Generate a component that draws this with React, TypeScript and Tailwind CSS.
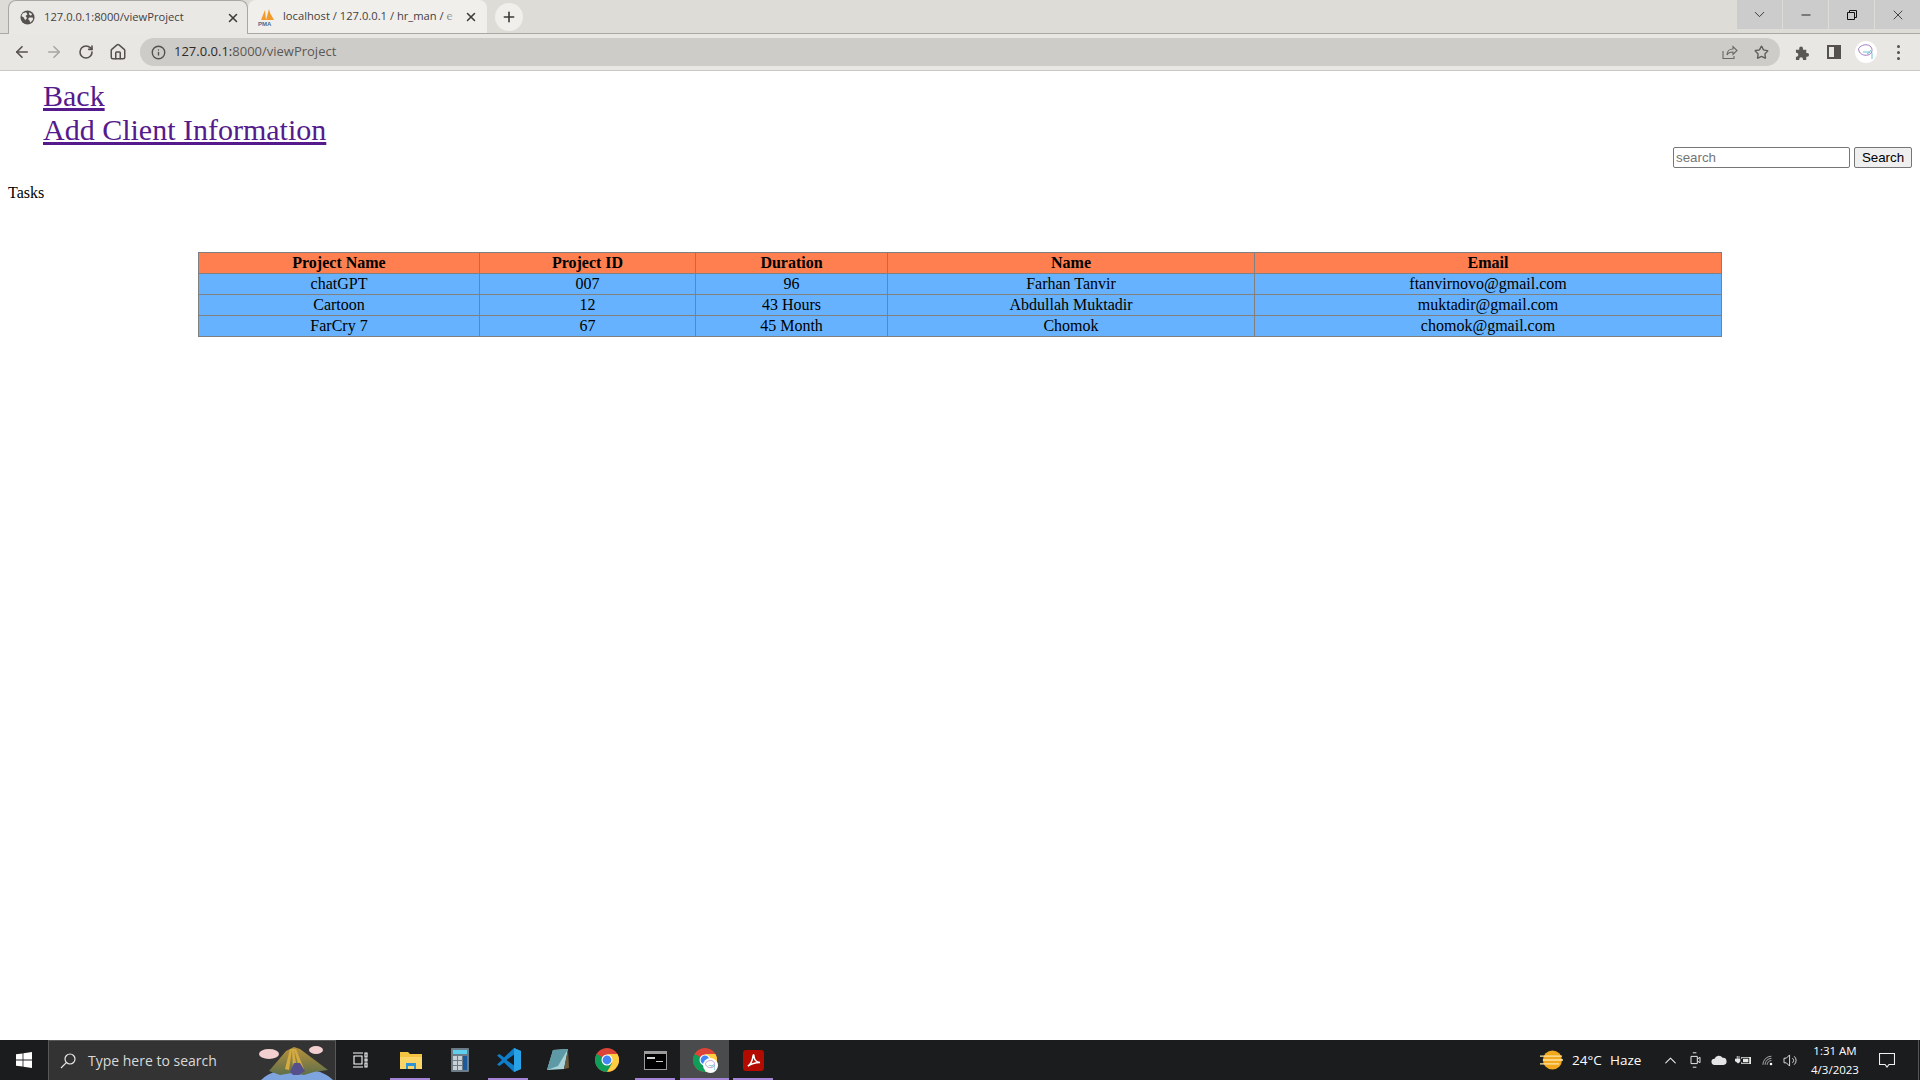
import { ArrowLeft, ArrowRight, ChevronDown, ChevronUp, Home, Info, Minus, Plus, RotateCw, Star, X } from "lucide-react"

const rows = [
  ["chatGPT", "007", "96", "Farhan Tanvir", "ftanvirnovo@gmail.com"],
  ["Cartoon", "12", "43 Hours", "Abdullah Muktadir", "muktadir@gmail.com"],
  ["FarCry 7", "67", "45 Month", "Chomok", "chomok@gmail.com"],
]

function Globe() {
  return (
    <svg viewBox="0 0 16 16" className="h-[15px] w-[15px] shrink-0">
      <circle cx="8" cy="8" r="7.5" fill="#55514f" />
      <path d="M3 3.5 6.5 2.5 8 4.5 6 6.5 7.5 8.5 5.5 11 4 8 1.5 6.5ZM10 8h3.5l.5 2-3 3.5-1-2.5-1.500-1.500ZM10 2.500l3 2-1.500 1.500-2-1.500Z" fill="#e9e8e5" />
    </svg>
  )
}

function PmaLogo() {
  return (
    <svg viewBox="0 0 18 18" className="h-[18px] w-[18px] shrink-0">
      <path d="M3 12 7 2l1 10ZM8 12 11 1l3 11ZM12 5l4 7h-2Z" fill="#f29b2b" />
      <text x="0" y="18" fontSize="6" fontWeight="700" fontFamily="'Liberation Sans', sans-serif" fill="#4b6a94">PMA</text>
    </svg>
  )
}

function ChromeIcon({ className }: { className?: string }) {
  return (
    <svg viewBox="0 0 24 24" className={className}>
      <circle cx="12" cy="12" r="12" fill="#db4437" />
      <path d="M12 12 1.600 6A12 12 0 0 0 12 24l6-10.400Z" fill="#0f9d58" />
      <path d="M12 6h10.400A12 12 0 0 1 12 24l5.200-9Z" fill="#ffcd40" />
      <circle cx="12" cy="12" r="5.500" fill="#fff" />
      <circle cx="12" cy="12" r="4.400" fill="#4285f4" />
    </svg>
  )
}

function Avatar({ className }: { className?: string }) {
  return (
    <svg viewBox="0 0 22 22" className={className}>
      <circle cx="11" cy="11" r="11" fill="#fff" />
      <path d="M5 6c3-3 9-3 11 0s1 7-3 8-8-1-9-4 0-3 1-4Z" fill="none" stroke="#8b5bb5" strokeWidth="0.8" />
      <path d="M8 11h7l-3 2M15 9l2 3v6" fill="none" stroke="#46b4c4" strokeWidth="0.8" />
    </svg>
  )
}

function TabClose() {
  return <X className="h-[14px] w-[14px] shrink-0 text-[#3f3b39]" strokeWidth={2.6} />
}

function BrowserChrome() {
  return (
    <div className="shrink-0 bg-[#e8e7e3] font-['Open_Sans',sans-serif]">
      <div className="flex h-[34px] border-b border-[#a9a8a3] bg-[#dedcd6]">
        <div className="ml-2 flex h-[34px] w-[240px] items-center gap-[9px] rounded-t-lg border border-b-0 border-[#a9a8a3] bg-[#e9e8e5] pl-[11px] pr-[7px] text-[11.2px] text-[#45413f]">
          <Globe />
          <span className="flex-1 truncate">127.0.0.1:8000/viewProject</span>
          <TabClose />
        </div>
        <div className="flex h-[33px] w-[239px] items-center gap-[7px] rounded-t-lg bg-[#f0efeb] pl-[10px] pr-[9px] text-[11.2px] text-[#45413f]">
          <PmaLogo />
          <span className="relative flex-1 overflow-hidden whitespace-nowrap">
            localhost / 127.0.0.1 / hr_man / e
            <span className="absolute right-0 top-0 h-full w-[14px] bg-gradient-to-r from-transparent to-[#f0efeb]" />
          </span>
          <TabClose />
        </div>
        <div className="ml-[8px] mt-[3px] flex h-[28px] w-[28px] items-center justify-center rounded-full bg-[#f0efeb]">
          <Plus className="h-[16px] w-[16px] text-[#3c3836]" strokeWidth={2.4} />
        </div>
        <div className="ml-auto flex h-[29px] gap-px">
          <div className="flex w-[45px] items-center justify-center bg-[#cccccc]"><ChevronDown className="h-[17px] w-[17px] text-[#222]" strokeWidth={1.2} /></div>
          <div className="flex w-[45px] items-center justify-center bg-[#cccccc]"><Minus className="h-[14px] w-[14px] text-[#111]" strokeWidth={1.5} /></div>
          <div className="flex w-[45px] items-center justify-center bg-[#cccccc]">
            <svg viewBox="0 0 10 10" className="h-[10px] w-[10px]" fill="none" stroke="#111" strokeWidth="1"><path d="M.5 2.500h7v7h-7zM2.500 2.500v-2h7v7h-2" /></svg>
          </div>
          <div className="flex w-[45px] items-center justify-center bg-[#cccccc]"><X className="h-[16px] w-[16px] text-[#111]" strokeWidth={1.1} /></div>
        </div>
      </div>
      <div className="flex h-[37px] items-center border-b border-[#c9c8c4]">
        <div className="flex w-[140px] items-center pl-[13px] text-[#55514f]">
          <ArrowLeft className="h-[18px] w-[18px]" strokeWidth={2.2} />
          <ArrowRight className="ml-[14px] h-[18px] w-[18px] text-[#a8a7a3]" strokeWidth={2.2} />
          <RotateCw className="ml-[15px] h-[16px] w-[16px]" strokeWidth={2.4} />
          <Home className="ml-[15px] h-[18px] w-[18px]" strokeWidth={2} />
        </div>
        <div className="flex h-[28px] w-[1640px] shrink-0 items-center rounded-full bg-[#cdccc8] pl-[11px] pr-[11px] text-[13px]">
          <Info className="h-[15px] w-[15px] text-[#55514f]" strokeWidth={2.2} />
          <span className="ml-[8px] text-[#2e2a28]">127.0.0.1:<span className="text-[#5c5855]">8000/viewProject</span></span>
          <svg viewBox="0 0 16 16" className="ml-auto h-[16px] w-[16px]" fill="none" stroke="#6a6865" strokeWidth="1.1">
            <path d="M1 7v7.500h11V12M5 11c0-4 3-6 6-6V2.500l4 4-4 4V8C8 8 6 9 5 11Z" />
          </svg>
          <Star className="ml-[16px] h-[15px] w-[15px] text-[#5f5d5a]" strokeWidth={2.2} />
        </div>
        <svg viewBox="0 0 16 16" className="ml-[15px] h-[15px] w-[15px] shrink-0" fill="#5a5855">
          <path d="M1 5h3.500V3.500a2 2 0 0 1 4 0V5H12v3.500h1a2 2 0 0 1 0 4h-1V16H8.500v-1a2 2 0 0 0-4 0v1H1v-3.500h1a2.200 2.200 0 0 0 0-4.200H1Z" />
        </svg>
        <svg viewBox="0 0 14 14" className="ml-[17px] h-[14px] w-[14px] shrink-0" fill="#55514f">
          <path d="M0 0h14v14H0Zm2 2v10h5V2Z" fillRule="evenodd" />
        </svg>
        <Avatar className="ml-[14px] h-[22px] w-[22px] shrink-0" />
        <div className="ml-[20px] flex shrink-0 flex-col gap-[3px]">
          <span className="h-[3px] w-[3px] rounded-full bg-[#55514f]" />
          <span className="h-[3px] w-[3px] rounded-full bg-[#55514f]" />
          <span className="h-[3px] w-[3px] rounded-full bg-[#55514f]" />
        </div>
      </div>
    </div>
  )
}

function Mountain() {
  return (
    <svg viewBox="0 0 80 40" className="h-10 w-[80px] shrink-0">
      <defs>
        <linearGradient id="rock" x1="0" y1="0" x2="0" y2="1">
          <stop offset="0" stopColor="#b8913a" />
          <stop offset="1" stopColor="#5f6f4a" />
        </linearGradient>
      </defs>
      <ellipse cx="42" cy="50" rx="41" ry="23" fill="#7fa5e0" />
      <path d="M14 30 31 10l8-4 6 2 28 21-14 2-10 3-12-2-12 2Z" fill="url(#rock)" />
      <path d="M35 8l-5 20 4 1 3-21 1 22 4 0-3-22 6 22 4-2-8-20Z" fill="#d3ab42" />
      <path d="M35 31l4-9 6 0 5 8-6 4h-6Z" fill="#55508c" />
      <ellipse cx="14" cy="13" rx="10" ry="5" fill="#f4cfd0" />
      <ellipse cx="61" cy="9" rx="7" ry="4" fill="#f4cfd0" />
    </svg>
  )
}

function Dock({ on, active, children }: { on?: boolean; active?: boolean; children: React.ReactNode }) {
  return (
    <div className={active ? "relative flex h-10 w-[49px] items-center justify-center bg-[#4a4b4c]" : "relative flex h-10 w-[49px] items-center justify-center"}>
      {children}
      {on && <span className={active ? "absolute bottom-0 left-0 h-[2px] w-full bg-[#a583d6]" : "absolute bottom-0 left-[4px] h-[2px] w-[40px] bg-[#a583d6]"} />}
    </div>
  )
}

function Taskbar() {
  return (
    <div className="flex h-10 shrink-0 items-center bg-[#1a1c1e] font-['Open_Sans',sans-serif] text-white">
      <div className="flex h-10 w-[48px] items-center justify-center">
        <svg viewBox="0 0 16 16" className="h-4 w-4" fill="#fff">
          <path d="M0 2.300 6.600 1.400v6.200H0ZM7.400 1.300 16 0v7.600H7.400ZM0 8.400h6.600v6.200L0 13.700ZM7.400 8.400H16V16l-8.600-1.300Z" />
        </svg>
      </div>
      <div className="flex h-10 w-[288px] items-center overflow-hidden border border-b-0 border-[#585858] bg-[#333333] pl-[11px]">
        <svg viewBox="0 0 16 16" className="h-4 w-4 shrink-0" fill="none" stroke="#e8e8e8" strokeWidth="1.2">
          <circle cx="10" cy="6" r="5" />
          <path d="M6.300 9.700 1 15" />
        </svg>
        <span className="ml-[12px] flex-1 whitespace-nowrap text-[14px] text-[#d9d9d9]">Type here to search</span>
        <Mountain />
      </div>
      <div className="flex h-10 w-[48px] items-center justify-center">
        <svg viewBox="0 0 16 16" className="h-4 w-4" fill="none" stroke="#fff" strokeWidth="1.1">
          <path d="M1 1h10M1 15h10M2 4h8v8H2zM13 1h2v4h-2zM13 7h2v2h-2zM13 11h2v4h-2z" />
        </svg>
      </div>
      <div className="ml-[2px] flex">
        <Dock on>
          <svg viewBox="0 0 22 20" className="h-[20px] w-[22px]">
            <path d="M0 2h8l2 2h12v15H0Z" fill="#f5c342" />
            <path d="M0 7h22v12H0Z" fill="#fbd568" />
            <path d="M6 13h10v6h-2v-3H8v3H6Z" fill="#2e94d6" />
          </svg>
        </Dock>
        <Dock>
          <svg viewBox="0 0 18 24" className="h-6 w-[18px]">
            <rect width="18" height="24" rx="1" fill="#6b7b88" />
            <rect x="2" y="2" width="14" height="4" fill="#5ed0ee" />
            <path d="M2 8h4v4H2zM7 8h4v4H7zM2 13h4v4H2zM7 13h4v4H7zM2 18h4v4H2zM7 18h4v4H7z" fill="#c9d1d6" />
            <path d="M12 8h4v14h-4z" fill="#1c5a9c" />
          </svg>
        </Dock>
        <Dock on>
          <svg viewBox="0 0 24 24" className="h-6 w-6">
            <path d="M17 0 7 9.500 2.500 6 0 7.500 5 12 0 16.500 2.500 18 7 14.500 17 24l7-3V3Z" fill="#0f7dc8" />
            <path d="M17 0v24l7-3V3Z" fill="#29a3e8" />
            <path d="M17 6.500v11L9.500 12Z" fill="#1a1c1e" />
          </svg>
        </Dock>
        <Dock>
          <svg viewBox="0 0 24 24" className="h-6 w-6">
            <path d="M7 2 22 1l-4 20L1 22Z" fill="#a6d4d8" />
            <path d="M7 2 22 1 12 18 1 22Z" fill="#5d9aa5" />
            <path d="m22 1 1 19-5 1Z" fill="#6b5a3a" />
          </svg>
        </Dock>
        <Dock>
          <ChromeIcon className="h-6 w-6" />
        </Dock>
        <Dock on>
          <div className="h-[19px] w-[23px] border border-[#9b9b9b] bg-black">
            <div className="h-[2px] bg-[#9b9b9b]" />
            <div className="ml-[2px] mt-[3px] h-[2px] w-[8px] bg-[#d0d0d0]" />
            <div className="ml-[11px] mt-[2px] h-px w-[7px] bg-[#d0d0d0]" />
          </div>
        </Dock>
        <Dock on active>
          <ChromeIcon className="h-6 w-6" />
          <Avatar className="absolute left-[23px] top-[18px] h-[15px] w-[15px]" />
        </Dock>
        <Dock on>
          <div className="flex h-[21px] w-[21px] items-center justify-center rounded-[3px] bg-[#b30b00]">
            <svg viewBox="0 0 16 16" className="h-[15px] w-[15px]" fill="none" stroke="#fff" strokeWidth="1.6">
              <path d="M2 14c3-2 5-7 5.500-11 .2-1.500 1-1.500 1 0C8.500 7 11 10 15 10c-4 0-9 1-13 4Z" />
            </svg>
          </div>
        </Dock>
      </div>
      <div className="ml-auto flex h-10 items-center">
        <svg viewBox="0 0 24 22" className="h-[22px] w-[23px]">
          <circle cx="13" cy="11" r="10" fill="#f2a81d" />
          <path d="M0 7h23M3 11h21M0 15h20" stroke="#fde3a8" strokeWidth="1.400" />
        </svg>
        <span className="ml-[9px] w-[29px] whitespace-nowrap text-[13.5px]">24°C</span>
        <span className="ml-[9px] w-[30px] whitespace-nowrap text-[13.5px]">Haze</span>
        <ChevronUp className="ml-[21px] h-[19px] w-[19px] text-[#e8e8e8]" strokeWidth={1.4} />
        <svg viewBox="0 0 12 20" className="ml-[10px] h-[18px] w-[11px]" fill="none" stroke="#e8e8e8" strokeWidth="1.1">
          <path d="M1 6h7v8H1zM8 9l3-2v6l-3-2M3 2h4M3 18h4" />
        </svg>
        <svg viewBox="0 0 18 12" className="ml-[10px] h-[11px] w-[16px]" fill="#e4e4e4">
          <path d="M4 11a3.500 3.500 0 0 1 0-7 5 5 0 0 1 9-1 4 4 0 0 1 1 8Z" />
        </svg>
        <svg viewBox="0 0 18 12" className="ml-[8px] h-[11px] w-[16px]" fill="#e8e8e8">
          <path d="M0 4h2V1h1v3h1V1h1v3h1v3L4 9H3L1 7H0ZM7 2h11v8H7V8h1v1h8V3H8v1H7Zm2 2h6v4H9Z" />
        </svg>
        <svg viewBox="0 0 14 12" className="ml-[11px] h-[11px] w-[12px]" fill="none" stroke="#bdbdbd" strokeWidth="1">
          <path d="M1 11a10 10 0 0 1 10-10M3.500 11a7.500 7.500 0 0 1 7.500-7.500M6 11a5 5 0 0 1 5-5" />
          <circle cx="10.500" cy="10" r="1.500" fill="#fff" stroke="none" />
        </svg>
        <svg viewBox="0 0 16 14" className="ml-[9px] h-[13px] w-[15px]" fill="none" stroke="#e4e4e4" strokeWidth="1">
          <path d="M1 4.500h2.500L7 1v12L3.500 9.500H1ZM10 4.500a3 3 0 0 1 0 5M12 2.500a6 6 0 0 1 0 9" />
        </svg>
        <div className="ml-[6px] flex w-[62px] flex-col items-center text-[11.5px] leading-[19px]">
          <span>1:31 AM</span>
          <span>4/3/2023</span>
        </div>
        <svg viewBox="0 0 16 16" className="ml-[13px] h-4 w-4" fill="none" stroke="#f0f0f0" strokeWidth="1.1">
          <path d="M.5 1.500h15v11H10L8 15l-2-2.500H.5Z" />
        </svg>
        <div className="ml-[23px] h-10 w-[2px] border-l border-[#555]" />
      </div>
    </div>
  )
}

export default function App() {
  return (
    <div className="flex h-screen flex-col overflow-hidden bg-white">
      <BrowserChrome />
      <main className="flex-1 font-['Liberation_Serif',serif] text-[16px] leading-[18px] text-black">
        <div className="pl-[43px] pt-[8px] text-[30px] leading-[34px] text-[#551a8b] underline">
          <div><a href="#">Back</a></div>
          <div><a href="#">Add Client Information</a></div>
        </div>
        <div className="flex justify-end gap-1 pr-[8px] font-['Liberation_Sans',sans-serif] text-[13.33px]">
          <input
            placeholder="search"
            className="h-[21px] w-[177px] rounded-[2px] border border-[#767676] px-[2px] placeholder:text-[#757575]"
          />
          <button className="h-[21px] w-[58px] rounded-[2px] border border-[#767676] bg-[#efefef] text-black">Search</button>
        </div>
        <p className="ml-[8px] mt-[16px]">Tasks</p>
        <table className="ml-[198px] mt-[50px] w-[1523px] table-fixed border-collapse border border-[#808080] text-center">
          <colgroup>
            <col className="w-[281px]" />
            <col className="w-[216px]" />
            <col className="w-[192px]" />
            <col className="w-[367px]" />
            <col className="w-[467px]" />
          </colgroup>
          <thead>
            <tr className="bg-[#ff7f50]">
              {["Project Name", "Project ID", "Duration", "Name", "Email"].map((h) => (
                <th key={h} className="border border-[#808080] p-px font-bold">{h}</th>
              ))}
            </tr>
          </thead>
          <tbody>
            {rows.map((r) => (
              <tr key={r[0]} className="bg-[#66b2ff]">
                {r.map((c, i) => (
                  <td key={i} className="border border-[#808080] p-px">{c}</td>
                ))}
              </tr>
            ))}
          </tbody>
        </table>
      </main>
      <Taskbar />
    </div>
  )
}
